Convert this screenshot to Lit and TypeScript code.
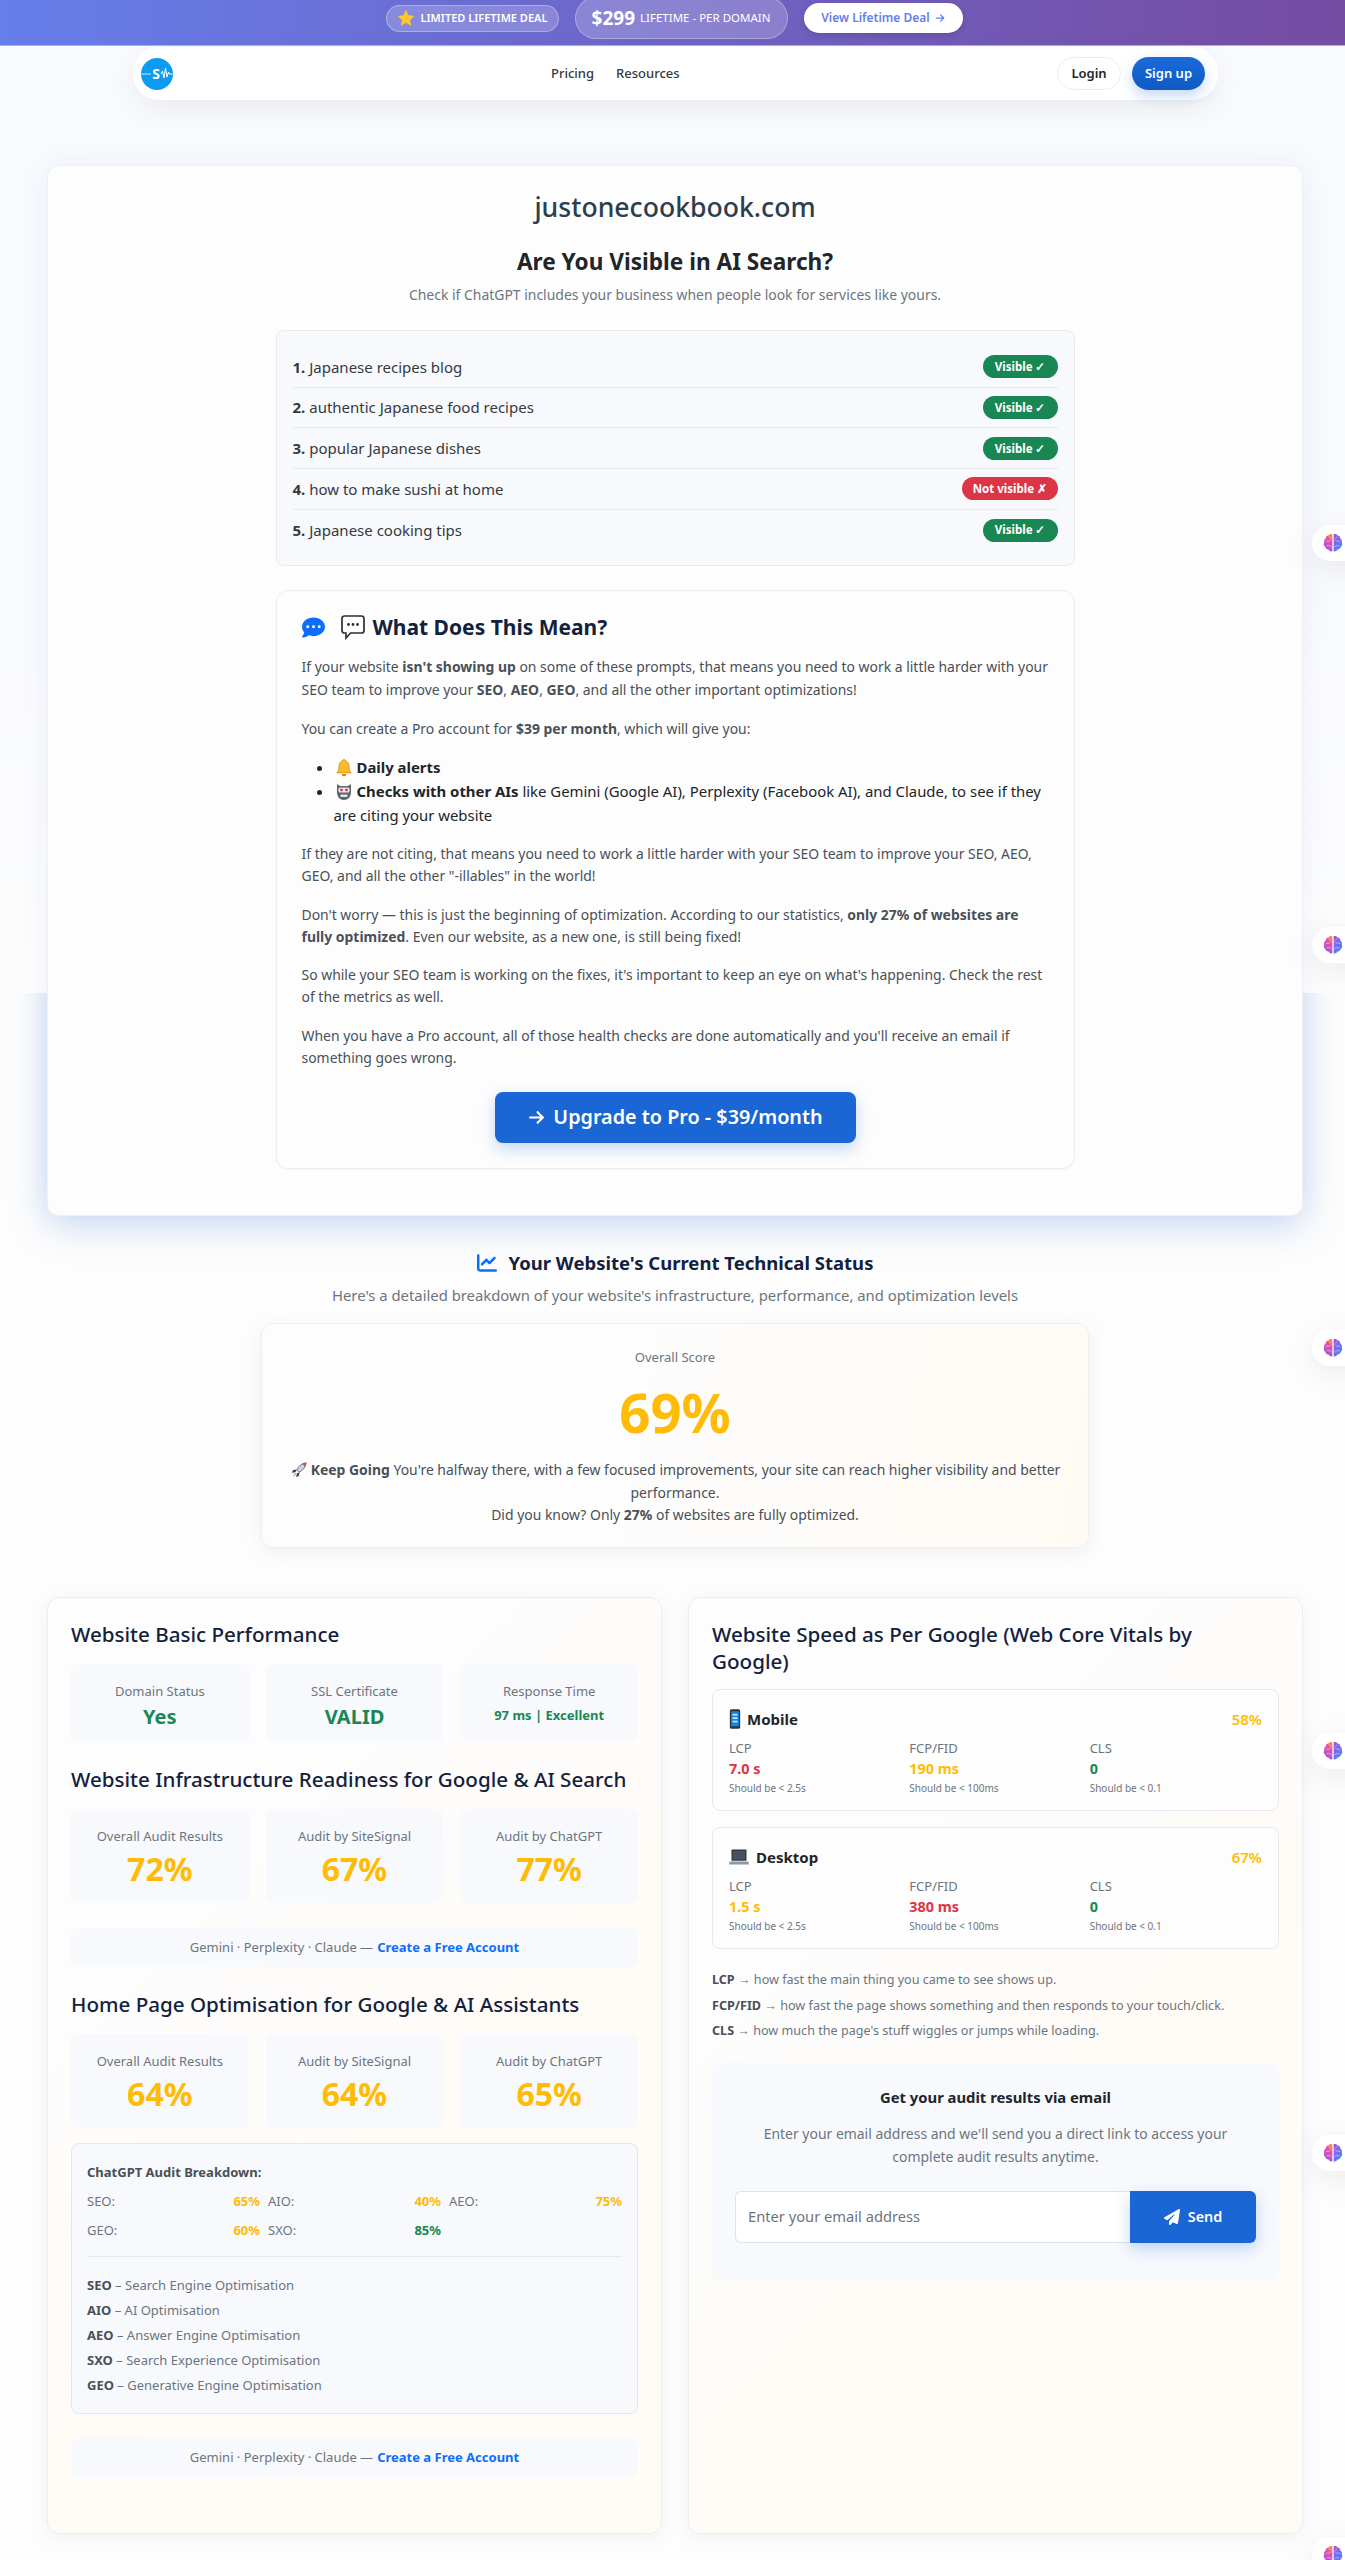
import { LitElement, html, css, svg } from 'lit';
import { customElement } from 'lit/decorators.js';

const FA = {
  dots: 'M256 448c141.4 0 256-93.1 256-208S397.4 32 256 32S0 125.1 0 240c0 45.1 17.7 86.8 47.7 120.9c-1.9 24.5-11.4 46.3-21.4 62.9c-5.5 9.2-11.1 16.6-15.2 21.6c-2.1 2.5-3.7 4.4-4.9 5.7c-.6 .6-1 1.1-1.3 1.4l-.3 .3c-4.6 4.6-5.9 11.4-3.4 17.4c2.5 6 8.3 9.9 14.8 9.9c28.7 0 57.6-8.9 81.6-19.3c22.9-9.9 42.4-21.9 54.3-30.6c31.8 11.5 67 17.9 104.1 17.9zM128 208a32 32 0 1 1 0 64 32 32 0 1 1 0-64zm128 0a32 32 0 1 1 0 64 32 32 0 1 1 0-64zm96 32a32 32 0 1 1 64 0 32 32 0 1 1 -64 0z',
  chart: 'M64 64c0-17.7-14.3-32-32-32S0 46.3 0 64V400c0 44.2 35.8 80 80 80H480c17.7 0 32-14.3 32-32s-14.3-32-32-32H80c-8.8 0-16-7.2-16-16V64zm406.6 86.6c12.5-12.5 12.5-32.8 0-45.3s-32.8-12.5-45.3 0L320 210.7l-57.4-57.4c-12.5-12.5-32.8-12.5-45.3 0l-112 112c-12.5 12.5-12.5 32.8 0 45.3s32.8 12.5 45.3 0L240 221.3l57.4 57.4c12.5 12.5 32.8 12.5 45.3 0l128-128z',
  arrow: 'M438.6 278.6c12.5-12.5 12.5-32.8 0-45.3l-160-160c-12.5-12.5-32.8-12.5-45.3 0s-12.5 32.8 0 45.3L338.8 224 32 224c-17.7 0-32 14.3-32 32s14.3 32 32 32l306.7 0L233.4 393.4c-12.5 12.5-12.5 32.8 0 45.3s32.8 12.5 45.3 0l160-160z',
  plane: 'M498.1 5.6c10.1 7 15.4 19.1 13.5 31.2l-64 416c-1.5 9.7-7.4 18.2-16 23s-18.9 5.4-28 1.6L284 427.7l-68.5 74.1c-8.9 9.7-22.9 12.9-35.2 8.1S160 493.2 160 480V396.4c0-4 1.5-7.8 4.2-10.7L331.8 202.8c5.8-6.3 5.6-16-.4-22s-15.7-6.4-22-.7L106 360.8 17.7 316.6C7.1 311.3 .3 300.7 0 288.9s5.9-22.8 16.1-28.7l448-256c10.7-6.1 23.9-5.5 34 1.4z',
};

const faIcon = (d: string, w: number, cls: string) =>
  html`<svg class=${cls} viewBox="0 0 ${w} 512" fill="currentColor"><path d=${d}></path></svg>`;

// emoji are drawn because the sandbox has no colour emoji font
const star = html`<svg class="emoji star" viewBox="0 0 24 24"><path fill="#fdc72e" d="M12 1l3.4 7.2 7.6 1-5.6 5.3 1.5 7.8L12 18.4l-6.9 3.9 1.5-7.8L1 9.2l7.6-1z"/></svg>`;
const bell = html`<svg class="emoji" viewBox="0 0 20 20"><path fill="#fbb92c" stroke="#c98a12" stroke-width=".7" d="M10 1.5c1 0 1.6.7 1.6 1.4 2.6.7 3.4 3 3.4 6 0 3 1 4.6 2.2 6H2.8C4 13.500 5 11.900 5 8.900c0-3 .8-5.300 3.400-6C8.400 2.200 9 1.500 10 1.500z"/><path fill="#c98a12" d="M7.600 16h4.800c-.3 1.400-1.200 2.300-2.400 2.300S7.900 17.400 7.600 16z"/></svg>`;
const robot = html`<svg class="emoji" viewBox="0 0 20 20"><path fill="#5b6470" d="M3 2l3 2h8l3-2v8c0 5-3 8-7 8s-7-3-7-8z"/><rect x="4.500" y="5.500" width="11" height="5" rx="1.500" fill="#e9edf1"/><circle cx="7.500" cy="8" r="1.400" fill="#e23a3a"/><circle cx="12.500" cy="8" r="1.400" fill="#e23a3a"/><rect x="6.500" y="12.500" width="7" height="2.500" rx=".8" fill="#dfe4e9"/></svg>`;
const rocket = html`<svg class="emoji" viewBox="0 0 20 20"><path fill="#c9d3de" stroke="#46505c" stroke-width=".8" d="M18 2c-5 .5-8.500 3.500-10.500 8l2.500 2.500c4.500-2 7.500-5.500 8-10.500z"/><path fill="#e0433a" d="M18 2c-1.500.2-3 .7-4.200 1.400l2.800 2.800C17.300 5 17.800 3.500 18 2z"/><path fill="#39424d" d="M7.500 9.500L3.500 10l-1.500 3 4-.5zM10.500 12.500L10 16.500l-3 1.500.5-4z"/><path fill="#f39a26" d="M5.500 13l1.500 1.500L3 18z"/></svg>`;
const phone = html`<svg class="emoji dev" viewBox="0 0 14 24"><rect x="1" y="0.500" width="12" height="23" rx="2" fill="#2d3640"/><rect x="2.500" y="3" width="9" height="17.500" fill="#1384e0"/><rect x="4" y="6" width="6" height="2" fill="#bfe3fb"/><rect x="4" y="10" width="6" height="2" fill="#bfe3fb"/><rect x="4" y="14" width="6" height="2" fill="#bfe3fb"/></svg>`;
const laptop = html`<svg class="emoji dev lap" viewBox="0 0 24 20"><rect x="3" y="1" width="18" height="13.500" rx="1" fill="#2d3640"/><rect x="4.500" y="2.500" width="15" height="10.500" fill="#46525e"/><path d="M1 15.500h22l1 2.500c0 .6-.4 1-1 1H1c-.6 0-1-.4-1-1z" fill="#8d98a3"/></svg>`;
const bubble = html`<svg class="bubble" viewBox="0 0 26 26"><path fill="#fff" stroke="#2b3138" stroke-width="1.700" d="M4.500 2h17C23 2 24 3 24 4.500v12c0 1.500-1 2.500-2.500 2.500H10.500l-4.500 5v-5H4.500C3 19 2 18 2 16.500v-12C2 3 3 2 4.500 2z"/><circle cx="8.500" cy="10.500" r="1.400" fill="#2b3138"/><circle cx="13" cy="10.500" r="1.400" fill="#2b3138"/><circle cx="17.500" cy="10.500" r="1.400" fill="#2b3138"/></svg>`;

const brain = html`<svg class="brain" viewBox="1 1 22 22">
  <defs>
    <linearGradient id="bl" x1="0.700" y1="0" x2="0.300" y2="1"><stop offset="0" stop-color="#f8923c"/><stop offset=".3" stop-color="#e84fa8"/><stop offset="1" stop-color="#9a57e8"/></linearGradient>
    <linearGradient id="br" x1="0.200" y1="0" x2="0.800" y2="1"><stop offset="0" stop-color="#a055e6"/><stop offset="1" stop-color="#3f8cf5"/></linearGradient>
  </defs>
  <path fill="url(#bl)" d="M11.300 2.500C9.500 1.600 7.600 2.300 7 3.800 5.200 3.800 3.900 5.200 4 7 2.500 7.800 1.700 9.700 2.400 11.400 1.300 13 1.800 15.300 3.500 16.200 3.700 18.100 5.300 19.400 7 19.200 8 21.200 10.400 21.900 11.300 21z"/>
  <path fill="url(#br)" d="M12.700 2.500C14.500 1.600 16.400 2.300 17 3.800 18.800 3.800 20.100 5.200 20 7 21.500 7.800 22.300 9.700 21.600 11.400 22.700 13 22.200 15.300 20.500 16.200 20.300 18.100 18.700 19.400 17 19.200 16 21.200 13.600 21.900 12.700 21z"/>
  <path fill="none" stroke="#fff" stroke-opacity=".7" stroke-width=".7" d="M4 10h4l2-2M5 15h4l2 2M8 5l1 2M20 10h-4l-2-2M19 15h-4l-2 2M16 5l-1 2"/>
</svg>`;

const logo = html`<svg class="logo" viewBox="0 0 32 32">
  <circle cx="16" cy="16" r="16" fill="#0d9bf0"/>
  <path d="M0 16h10" stroke="#fff" stroke-opacity=".8" stroke-width="1" />
  <text x="15" y="21" font-size="14" font-weight="700" fill="#fff" text-anchor="middle">S</text>
  ${svg`<path d="M20 16l1.500-3 1.500 7 1.500-10 1.500 9 1.500-5 1 2h3" fill="none" stroke="#fff" stroke-width="1"/>`}
</svg>`;

type Tone = 'ok' | 'warn' | 'bad';

const PROMPTS: [string, boolean][] = [
  ['Japanese recipes blog', true],
  ['authentic Japanese food recipes', true],
  ['popular Japanese dishes', true],
  ['how to make sushi at home', false],
  ['Japanese cooking tips', true],
];

const BRAIN_TOPS = [525, 927, 1330, 1733, 2135, 2537];

@customElement('app-root')
export class AppRoot extends LitElement {
  static styles = css`
    :host {
      display: block;
      position: relative;
      isolation: isolate;
      width: 1345px;
      height: 2560px;
      overflow: hidden;
      background: linear-gradient(180deg, #f8fafd 0, #f9fafd 600px, #fdfdfd 1000px);
      font-family: 'Noto Sans', Roboto, sans-serif;
      font-size: 13.950px;
      line-height: 1.5;
      color: #212529;
      --blue: #1a66d4;
      --amber: #ffbb05;
      --green: #198754;
      --red: #dc3545;
      --muted: #6c757d;
      --body: #495057;
      --panel: #f8f9fd;
      --line: #e6e9ee;
    }
    * { box-sizing: border-box; }
    h1, h2, h3, h4, p, ul { margin: 0; }

    .banner {
      height: 46px;
      padding: 0 0 9px 3px;
      display: flex;
      align-items: center;
      justify-content: center;
      gap: 16px;
      color: #fff;
      background: linear-gradient(90deg, #667eea, #764ba2);
      border-bottom: 1px solid #a9b1ee;
      overflow: hidden;
    }
    .deal {
      height: 27px;
      width: 173px;
      display: flex;
      align-items: center;
      justify-content: center;
      gap: 3px;
      border-radius: 14px;
      border: 1px solid rgba(255, 255, 255, 0.3);
      background: rgba(255, 255, 255, 0.2);
      font-size: 11px;
      font-weight: 600;
      white-space: nowrap;
    }
    .star { width: 13px; height: 13px; margin: 0; vertical-align: 0; }
    .price {
      height: 42px;
      width: 213px;
      display: flex;
      align-items: center;
      justify-content: center;
      gap: 5px;
      border-radius: 21px;
      border: 1px solid rgba(255, 255, 255, 0.3);
      background: rgba(255, 255, 255, 0.2);
      font-size: 11.500px;
      white-space: nowrap;
    }
    .price b { font-size: 19px; font-weight: 700; }
    .view {
      height: 30px;
      width: 159px;
      display: flex;
      align-items: center;
      justify-content: center;
      gap: 5px;
      border-radius: 15px;
      background: #fff;
      color: #667eea;
      font-size: 12px;
      font-weight: 600;
      box-shadow: 0 2px 6px rgba(0, 0, 0, 0.15);
    }
    .view svg { width: 10px; height: 10px; }

    .nav {
      margin: 1px 0 0 133px;
      width: 1085px;
      height: 53px;
      padding: 0 13px 0 8px;
      display: grid;
      grid-template-columns: 410px auto 1fr;
      align-items: center;
      border-radius: 26px;
      background: #fff;
      box-shadow: 0 10px 30px rgba(0, 0, 0, 0.06);
    }
    .logo { width: 32px; height: 32px; display: block; font-family: inherit; }
    .links {
      display: flex;
      gap: 22px;
      font-size: 13px;
      font-weight: 500;
      color: #343a40;
    }
    .actions { display: flex; justify-content: flex-end; align-items: center; gap: 11px; }
    .login, .signup {
      height: 33px;
      display: flex;
      align-items: center;
      justify-content: center;
      border-radius: 17px;
      font-size: 13px;
      font-weight: 600;
    }
    .login {
      width: 64px;
      background: #fff;
      border: 1px solid #eceef1;
      color: #212529;
    }
    .signup {
      width: 73px;
      color: #fff;
      background: linear-gradient(180deg, #1a6ad8, #0f5bc4);
      box-shadow: 0 6px 14px rgba(26, 102, 212, 0.25);
    }

    .page { padding: 65px 42px 0 47px; }

    .main {
      position: relative;
      height: 1051px;
      padding-top: 22px;
      border-radius: 12px;
      background: #fdfdfd;
      border: 1px solid #eef0f3;
      box-shadow: 0 0 30px rgba(40, 90, 180, 0.07);
    }
    /* the stronger blue glow only starts partway down the card */
    .main::before {
      content: '';
      position: absolute;
      inset: 0;
      z-index: -1;
      border-radius: 12px;
      box-shadow: 0 10px 40px rgba(26, 102, 212, 0.22);
      clip-path: inset(827px -70px -70px -70px);
    }
    .domain {
      text-align: center;
      font-size: 26.600px;
      line-height: 38px;
      font-weight: 500;
      color: #2c3e50;
    }
    .main h2 {
      margin-top: 18px;
      text-align: center;
      font-size: 22.600px;
      line-height: 36px;
      font-weight: 700;
    }
    .lead {
      margin-top: 4px;
      text-align: center;
      color: var(--muted);
      line-height: 22px;
    }
    .panel-wrap { width: 799px; margin: 0 auto; }
    .prompts {
      margin-top: 24px;
      height: 236px;
      padding: 16px 16px;
      background: var(--panel);
      border: 1px solid var(--line);
      border-radius: 8px;
    }
    .prompt {
      height: 40.700px;
      display: flex;
      align-items: center;
      justify-content: space-between;
      border-bottom: 1px solid var(--line);
      font-size: 15px;
      color: #343a40;
    }
    .prompt:last-child { border-bottom: 0; }
    .prompt b { font-weight: 700; }
    .badge {
      height: 23px;
      padding: 0 12px;
      display: flex;
      align-items: center;
      border-radius: 12px;
      color: #fff;
      font-size: 11.500px;
      font-weight: 700;
    }
    .badge.yes { background: var(--green); }
    .badge.no { background: var(--red); padding: 0 10.500px; }

    .explain {
      margin-top: 24px;
      height: 579px;
      padding: 21px 20px 0 25px;
      background: #fdfdfd;
      border: 1px solid #eceef2;
      border-radius: 12px;
      box-shadow: 0 1px 3px rgba(0, 0, 0, 0.03);
      color: var(--body);
    }
    .explain h3 {
      display: flex;
      align-items: center;
      font-size: 21px;
      line-height: 30px;
      font-weight: 700;
      color: #14213d;
    }
    .explain h3 .dots { width: 23px; height: 23px; color: #0d6efd; margin-right: 15px; }
    .bubble { width: 26px; height: 26px; margin-right: 7px; }
    .explain p { line-height: 22px; margin-top: 16.500px; }
    .explain p.first { margin-top: 13px; line-height: 23px; }
    .explain ul {
      margin: 15px 0 0;
      padding-left: 32px;
      color: #212529;
      font-size: 14.900px;
      line-height: 24px;
    }
    .explain b { font-weight: 700; }
    .emoji { width: 18px; height: 18px; vertical-align: -4px; display: inline-block; margin-right: 3px; }
    .explain li .emoji { width: 20px; height: 20px; vertical-align: -5px; }
    .upgrade {
      width: 361px;
      height: 51px;
      margin: 23px auto 0;
      transform: translateX(-2px);
      display: flex;
      align-items: center;
      justify-content: center;
      gap: 8px;
      border-radius: 8px;
      background: var(--blue);
      color: #fff;
      font-size: 19.800px;
      font-weight: 600;
      box-shadow: 0 6px 16px rgba(26, 102, 212, 0.25);
    }
    .upgrade svg { width: 17px; height: 17px; }

    .status-title {
      margin-top: 32px;
      display: flex;
      align-items: center;
      justify-content: center;
      gap: 12px;
      font-size: 18.500px;
      line-height: 30px;
      font-weight: 700;
      color: #14213d;
    }
    .status-title svg { width: 20px; height: 20px; color: #0d6efd; }
    .status-lead {
      margin-top: 6px;
      text-align: center;
      color: var(--muted);
      font-size: 14.850px;
      line-height: 22px;
    }
    .score {
      width: 828px;
      height: 225px;
      margin: 17px auto 0;
      padding-top: 22px;
      text-align: center;
      border: 1px solid #eceef1;
      border-radius: 12px;
      background: linear-gradient(100deg, #fdfdfd 45%, #fffaf4);
      box-shadow: 0 4px 20px rgba(0, 0, 0, 0.06);
      color: var(--body);
    }
    .score .label { font-size: 13px; line-height: 22px; color: var(--muted); }
    .score .big {
      margin-top: 8px;
      font-size: 54.500px;
      line-height: 72px;
      font-weight: 700;
      color: var(--amber);
    }
    .score p { margin-top: 11px; line-height: 22.500px; }
    .score b { font-weight: 700; }

    .columns {
      margin-top: 49px;
      display: grid;
      grid-template-columns: 615px 615px;
      gap: 26px;
    }
    .col {
      height: 937px;
      padding: 23px 23px 0;
      border: 1px solid #ebedf0;
      border-radius: 12px;
      background: linear-gradient(135deg, #fdfdfd 30%, #fffbf6 62%);
      box-shadow: 0 4px 20px rgba(0, 0, 0, 0.05);
    }
    .col h3 {
      font-size: 20.600px;
      line-height: 27px;
      font-weight: 500;
      color: #14213d;
    }
    .stats {
      display: grid;
      grid-template-columns: repeat(3, 1fr);
      gap: 17px;
      align-items: start;
      margin: 16px 0 23px;
    }
    .stat {
      min-height: 79px;
      padding: 17px 8px 6px;
      text-align: center;
      background: var(--panel);
      border-radius: 8px;
      color: var(--muted);
      font-size: 13px;
      line-height: 20px;
    }
    .stat.tall { height: 94px; }
    .stat.short { min-height: 77px; }
    .val { font-weight: 700; color: var(--green); }
    .val.l { font-size: 20px; line-height: 32px; }
    .val.s { font-size: 13px; line-height: 28px; }
    .val.xl { font-size: 32px; line-height: 46px; color: var(--amber); }
    .cta {
      height: 39px;
      display: flex;
      align-items: center;
      justify-content: center;
      gap: 4px;
      background: var(--panel);
      border-radius: 8px;
      color: var(--muted);
      font-size: 13px;
    }
    .cta a { color: #0d6efd; font-weight: 700; text-decoration: none; }
    .col h3.gap { margin-top: 24px; }
    .stats.tight { margin-top: 16px; margin-bottom: 25px; }
    .stats.home { margin-top: 16px; margin-bottom: 15px; }

    .breakdown {
      height: 271px;
      padding: 18px 15px 15px;
      background: var(--panel);
      border: 1px solid #e2e6ec;
      border-radius: 8px;
      color: var(--muted);
      font-size: 13px;
    }
    .breakdown h4 { font-size: 13px; line-height: 20px; font-weight: 700; color: var(--body); }
    .scores {
      margin-top: 9px;
      display: grid;
      grid-template-columns: repeat(3, 1fr);
      gap: 9px 8px;
    }
    .pair { display: flex; justify-content: space-between; line-height: 20px; }
    .pair b { font-weight: 700; }
    .warn { color: var(--amber); }
    .ok { color: var(--green); }
    .bad { color: var(--red); }
    .legend {
      margin-top: 16px;
      padding-top: 16px;
      border-top: 1px solid var(--line);
      line-height: 25px;
    }
    .legend b, .notes b { font-weight: 700; color: var(--body); }
    .breakdown + .cta { margin-top: 24px; }

    .device {
      height: 122px;
      margin-bottom: 16px;
      padding: 16px;
      background: #fdfdfd;
      border: 1px solid #e6e9ed;
      border-radius: 8px;
    }
    .device-top {
      display: flex;
      justify-content: space-between;
      align-items: center;
      height: 26px;
      font-size: 15px;
      font-weight: 700;
      color: #212529;
    }
    .device-top i { font-style: normal; font-weight: 600; font-size: 15px; color: var(--amber); }
    .dev { width: 12px; height: 24px; vertical-align: -6px; margin-right: 6px; }
    .dev.lap { width: 20px; height: 18px; vertical-align: -3px; margin-right: 7px; }
    .metrics {
      margin-top: 6px;
      display: grid;
      grid-template-columns: repeat(3, 1fr);
      gap: 8px;
    }
    .metric .k { font-size: 13px; line-height: 20px; color: var(--muted); }
    .metric .v { font-size: 14.400px; line-height: 22px; font-weight: 700; }
    .metric .h { font-size: 10px; line-height: 16px; color: var(--muted); }
    .col h3 + .device { margin-top: 14px; }
    .notes {
      margin-top: 18px;
      font-size: 12.600px;
      line-height: 25.500px;
      color: var(--muted);
    }
    .email {
      margin-top: 19px;
      height: 218px;
      padding: 23px;
      text-align: center;
      background: #f7f9fd;
      border-radius: 8px;
      color: var(--muted);
    }
    .email h4 { font-size: 14.800px; line-height: 22px; font-weight: 700; color: #212529; }
    .email p { margin-top: 14px; line-height: 23px; }
    .form { margin-top: 23px; display: flex; height: 52px; }
    .input {
      flex: 1;
      display: flex;
      align-items: center;
      padding-left: 12px;
      background: #fff;
      border: 1px solid #dee2e6;
      border-right: 0;
      border-radius: 6px 0 0 6px;
      text-align: left;
      font-size: 14.700px;
    }
    .send {
      width: 126px;
      display: flex;
      align-items: center;
      justify-content: center;
      gap: 8px;
      background: var(--blue);
      color: #fff;
      font-size: 14.400px;
      font-weight: 600;
      border-radius: 0 6px 6px 0;
      box-shadow: 0 6px 16px rgba(26, 102, 212, 0.25);
    }
    .send svg { width: 16px; height: 16px; }

    .float {
      position: absolute;
      left: 1312px;
      width: 60px;
      height: 36px;
      padding-left: 11px;
      display: flex;
      align-items: center;
      background: #fff;
      border-radius: 18px;
      box-shadow: 0 8px 30px rgba(0, 0, 0, 0.07);
    }
    .brain { width: 20px; height: 20px; }
  `;

  private stat(label: string, value: string, size: string, extra = '') {
    return html`<div class="stat ${extra}">${label}<div class="val ${size}">${value}</div></div>`;
  }

  private cta() {
    return html`<div class="cta">Gemini · Perplexity · Claude — <a href="#">Create a Free Account</a></div>`;
  }

  private device(icon: unknown, name: string, pct: string, vals: [string, Tone][]) {
    const keys = [['LCP', 'Should be < 2.5s'], ['FCP/FID', 'Should be < 100ms'], ['CLS', 'Should be < 0.1']];
    return html`<div class="device">
      <div class="device-top"><span>${icon}${name}</span><i>${pct}</i></div>
      <div class="metrics">
        ${keys.map(([k, h], i) => html`<div class="metric">
          <div class="k">${k}</div>
          <div class="v ${vals[i][1]}">${vals[i][0]}</div>
          <div class="h">${h}</div>
        </div>`)}
      </div>
    </div>`;
  }

  render() {
    return html`
      <div class="banner">
        <div class="deal">${star}LIMITED LIFETIME DEAL</div>
        <div class="price"><b>$299</b> LIFETIME - PER DOMAIN</div>
        <div class="view">View Lifetime Deal ${faIcon(FA.arrow, 448, '')}</div>
      </div>
      <div class="nav">
        <div>${logo}</div>
        <div class="links"><span>Pricing</span><span>Resources</span></div>
        <div class="actions"><div class="login">Login</div><div class="signup">Sign up</div></div>
      </div>

      <div class="page">
        <section class="main">
          <div class="domain">justonecookbook.com</div>
          <h2>Are You Visible in AI Search?</h2>
          <div class="lead">Check if ChatGPT includes your business when people look for services like yours.</div>
          <div class="panel-wrap">
            <div class="prompts">
              ${PROMPTS.map(([p, yes], i) => html`<div class="prompt">
                <span><b>${i + 1}.</b> ${p}</span>
                <span class="badge ${yes ? 'yes' : 'no'}">${yes ? 'Visible ✓' : 'Not visible ✗'}</span>
              </div>`)}
            </div>
            <div class="explain">
              <h3>${faIcon(FA.dots, 512, 'dots')}${bubble}What Does This Mean?</h3>
              <p class="first">If your website <b>isn't showing up</b> on some of these prompts, that means you need to work a little harder with your SEO team to improve your <b>SEO</b>, <b>AEO</b>, <b>GEO</b>, and all the other important optimizations!</p>
              <p>You can create a Pro account for <b>$39 per month</b>, which will give you:</p>
              <ul>
                <li>${bell}<b>Daily alerts</b></li>
                <li>${robot}<b>Checks with other AIs</b> like Gemini (Google AI), Perplexity (Facebook AI), and Claude, to see if they are citing your website</li>
              </ul>
              <p>If they are not citing, that means you need to work a little harder with your SEO team to improve your SEO, AEO, GEO, and all the other "-illables" in the world!</p>
              <p>Don't worry — this is just the beginning of optimization. According to our statistics, <b>only 27% of websites are<br />fully optimized</b>. Even our website, as a new one, is still being fixed!</p>
              <p>So while your SEO team is working on the fixes, it's important to keep an eye on what's happening. Check the rest of the metrics as well.</p>
              <p>When you have a Pro account, all of those health checks are done automatically and you'll receive an email if something goes wrong.</p>
              <div class="upgrade">${faIcon(FA.arrow, 448, '')}Upgrade to Pro - $39/month</div>
            </div>
          </div>
        </section>

        <div class="status-title">${faIcon(FA.chart, 512, '')}Your Website's Current Technical Status</div>
        <div class="status-lead">Here's a detailed breakdown of your website's infrastructure, performance, and optimization levels</div>

        <section class="score">
          <div class="label">Overall Score</div>
          <div class="big">69%</div>
          <p>${rocket}<b>Keep Going</b> You're halfway there, with a few focused improvements, your site can reach higher visibility and better performance.<br />Did you know? Only <b>27%</b> of websites are fully optimized.</p>
        </section>

        <div class="columns">
          <section class="col">
            <h3>Website Basic Performance</h3>
            <div class="stats">
              ${this.stat('Domain Status', 'Yes', 'l')}
              ${this.stat('SSL Certificate', 'VALID', 'l')}
              ${this.stat('Response Time', '97 ms | Excellent', 's', 'short')}
            </div>
            <h3>Website Infrastructure Readiness for Google &amp; AI Search</h3>
            <div class="stats tight">
              ${this.stat('Overall Audit Results', '72%', 'xl', 'tall')}
              ${this.stat('Audit by SiteSignal', '67%', 'xl', 'tall')}
              ${this.stat('Audit by ChatGPT', '77%', 'xl', 'tall')}
            </div>
            ${this.cta()}
            <h3 class="gap">Home Page Optimisation for Google &amp; AI Assistants</h3>
            <div class="stats home">
              ${this.stat('Overall Audit Results', '64%', 'xl', 'tall')}
              ${this.stat('Audit by SiteSignal', '64%', 'xl', 'tall')}
              ${this.stat('Audit by ChatGPT', '65%', 'xl', 'tall')}
            </div>
            <div class="breakdown">
              <h4>ChatGPT Audit Breakdown:</h4>
              <div class="scores">
                <div class="pair">SEO: <b class="warn">65%</b></div>
                <div class="pair">AIO: <b class="warn">40%</b></div>
                <div class="pair">AEO: <b class="warn">75%</b></div>
                <div class="pair">GEO: <b class="warn">60%</b></div>
                <div class="pair">SXO: <b class="ok">85%</b></div>
              </div>
              <div class="legend">
                <div><b>SEO</b> – Search Engine Optimisation</div>
                <div><b>AIO</b> – AI Optimisation</div>
                <div><b>AEO</b> – Answer Engine Optimisation</div>
                <div><b>SXO</b> – Search Experience Optimisation</div>
                <div><b>GEO</b> – Generative Engine Optimisation</div>
              </div>
            </div>
            ${this.cta()}
          </section>

          <section class="col">
            <h3>Website Speed as Per Google (Web Core Vitals by<br />Google)</h3>
            ${this.device(phone, 'Mobile', '58%', [['7.0 s', 'bad'], ['190 ms', 'warn'], ['0', 'ok']])}
            ${this.device(laptop, 'Desktop', '67%', [['1.5 s', 'warn'], ['380 ms', 'bad'], ['0', 'ok']])}
            <div class="notes">
              <div><b>LCP</b> → how fast the main thing you came to see shows up.</div>
              <div><b>FCP/FID</b> → how fast the page shows something and then responds to your touch/click.</div>
              <div><b>CLS</b> → how much the page's stuff wiggles or jumps while loading.</div>
            </div>
            <div class="email">
              <h4>Get your audit results via email</h4>
              <p>Enter your email address and we'll send you a direct link to access your complete audit results anytime.</p>
              <div class="form">
                <div class="input">Enter your email address</div>
                <div class="send">${faIcon(FA.plane, 512, '')}Send</div>
              </div>
            </div>
          </section>
        </div>
      </div>

      ${BRAIN_TOPS.map((top) => html`<div class="float" style="top:${top}px">${brain}</div>`)}
    `;
  }
}

declare global {
  interface HTMLElementTagNameMap {
    'app-root': AppRoot;
  }
}
